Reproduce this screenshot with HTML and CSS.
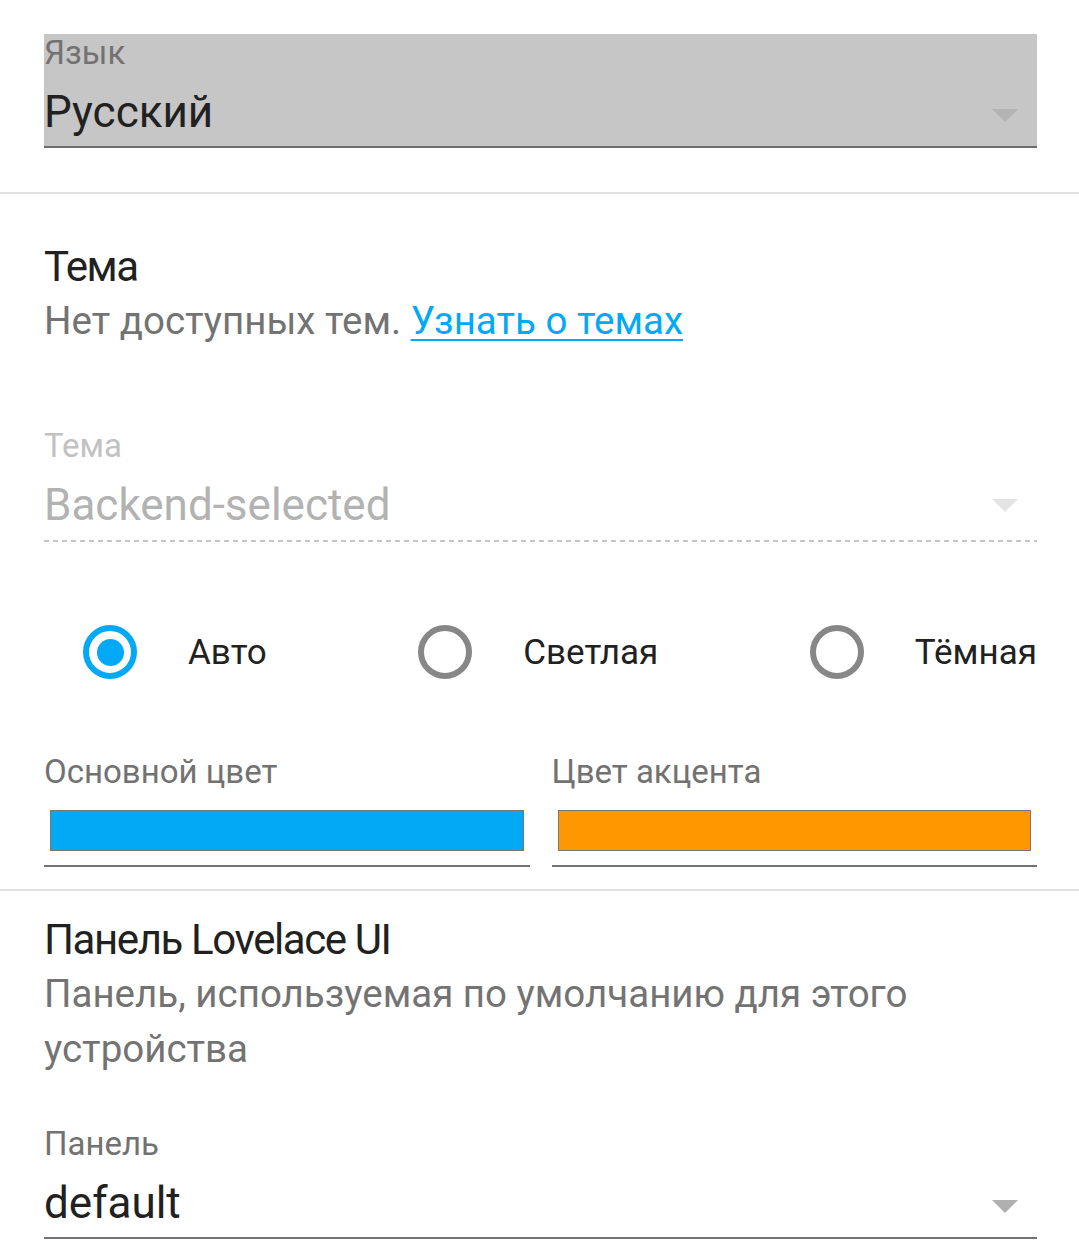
FILE: index.html
```html
<!DOCTYPE html>
<html lang="ru">
<head>
    <meta charset="UTF-8">
    <meta name="viewport" content="width=device-width, initial-scale=1.0">
    <title>Профиль</title>
    <link rel="stylesheet" href="styles.css">
</head>
<body>
    <section class="block block-lang">
        <div class="select filled">
            <div class="select-text">
                <span class="select-label">Язык</span>
                <span class="select-value">Русский</span>
            </div>
            <span class="arrow"></span>
        </div>
    </section>

    <div class="divider"></div>

    <section class="block block-theme">
        <div class="row-heading">Тема</div>
        <div class="row-desc">Нет доступных тем. <a href="#">Узнать о темах</a></div>

        <div class="select disabled">
            <div class="select-text">
                <span class="select-label">Тема</span>
                <span class="select-value">Backend-selected</span>
            </div>
            <span class="arrow"></span>
        </div>

        <div class="radios">
            <label class="radio-field">
                <span class="radio checked"></span>
                <span class="radio-label">Авто</span>
            </label>
            <label class="radio-field">
                <span class="radio"></span>
                <span class="radio-label">Светлая</span>
            </label>
            <label class="radio-field">
                <span class="radio"></span>
                <span class="radio-label">Тёмная</span>
            </label>
        </div>

        <div class="colors">
            <div class="color-field">
                <span class="color-label">Основной цвет</span>
                <span class="swatch primary"></span>
            </div>
            <div class="color-field">
                <span class="color-label">Цвет акцента</span>
                <span class="swatch accent"></span>
            </div>
        </div>
    </section>

    <div class="divider"></div>

    <section class="block block-panel">
        <div class="row-heading">Панель Lovelace UI</div>
        <div class="row-desc">Панель, используемая по умолчанию для этого устройства</div>

        <div class="select plain">
            <div class="select-text">
                <span class="select-label">Панель</span>
                <span class="select-value">default</span>
            </div>
            <span class="arrow"></span>
        </div>
    </section>
</body>
</html>
```

FILE: styles.css
```css
body {
    margin: 0;
    background: #fff;
    font-family: Roboto, 'Noto Sans', sans-serif;
    color: #212121;
}
.block {
    padding: 0 42px 0 44px;
}
.block-lang {
    padding-top: 34px;
    padding-bottom: 44px;
}
.block-theme {
    padding-top: 46px;
    padding-bottom: 22px;
}
.block-panel {
    padding-top: 22px;
}
.divider {
    height: 2px;
    background: #e2e2e2;
}

/* settings row text */
.row-heading {
    font-size: 42px;
    line-height: 53px;
    letter-spacing: -1.4px;
    color: #212121;
}
.row-desc {
    width: 880px;
    font-size: 38.5px;
    line-height: 55px;
    color: #737373;
}
.row-desc a {
    color: #03a9f4;
    text-decoration: underline;
    text-decoration-thickness: 2px;
    text-underline-offset: 5px;
}

/* select fields */
.select {
    display: flex;
    align-items: flex-end;
    justify-content: space-between;
    padding-bottom: 8px;
}
.select-text {
    display: flex;
    flex-direction: column;
}
.select-label {
    font-size: 33px;
    line-height: 38px;
    color: #727272;
}
.select-value {
    margin-top: 14px;
    font-size: 44px;
    line-height: 52px;
    color: #212121;
}
.arrow {
    width: 0;
    height: 0;
    margin: 0 19px 16px 0;
    border-left: 13px solid transparent;
    border-right: 13px solid transparent;
    border-top: 13px solid #b0b0b0;
}
.select.filled {
    background: #c6c6c6;
    border-bottom: 2px solid #6d6d6d;
}
.select.filled .arrow {
    border-top-color: #b3b3b3;
}
.select.disabled {
    margin-top: 79px;
    padding-bottom: 11px;
    background-image: linear-gradient(to right, #c6c6c6 55%, transparent 0);
    background-size: 9px 2px;
    background-repeat: repeat-x;
    background-position: left bottom;
}
.select.disabled .select-label {
    color: #c2c2c2;
}
.select.disabled .select-value {
    color: #b2b2b2;
}
.select.disabled .arrow {
    margin-bottom: 19px;
    border-top-color: #e4e4e4;
}
.select.plain {
    margin-top: 49px;
    border-bottom: 2px solid #737373;
}

/* radios */
.radios {
    display: flex;
    justify-content: space-between;
    align-items: center;
    margin-top: 55px;
    padding: 0 0 0 11px;
}
.radio-field {
    display: flex;
    align-items: center;
}
.radio {
    box-sizing: border-box;
    width: 54px;
    height: 54px;
    margin: 28px;
    border: 6px solid #878787;
    border-radius: 50%;
    display: flex;
    align-items: center;
    justify-content: center;
}
.radio.checked {
    border-color: #03a9f4;
}
.radio.checked::after {
    content: '';
    width: 27px;
    height: 27px;
    border-radius: 50%;
    background: #03a9f4;
}
.radio-label {
    margin-left: -5px;
    padding-left: 28px;
    font-size: 35px;
    color: #212121;
}

/* colour pickers */
.colors {
    display: grid;
    grid-template-columns: 1fr 1fr;
    gap: 22px;
    margin-top: 46px;
}
.color-field {
    display: flex;
    flex-direction: column;
    border-bottom: 2px solid #737373;
}
.color-label {
    font-size: 33px;
    line-height: 38px;
    color: #727272;
}
.swatch {
    height: 39px;
    margin: 19px 6px 14px 6px;
    border: 1px solid #767676;
}
.swatch.primary {
    background: #03a9f4;
}
.swatch.accent {
    background: #ff9800;
}
```
